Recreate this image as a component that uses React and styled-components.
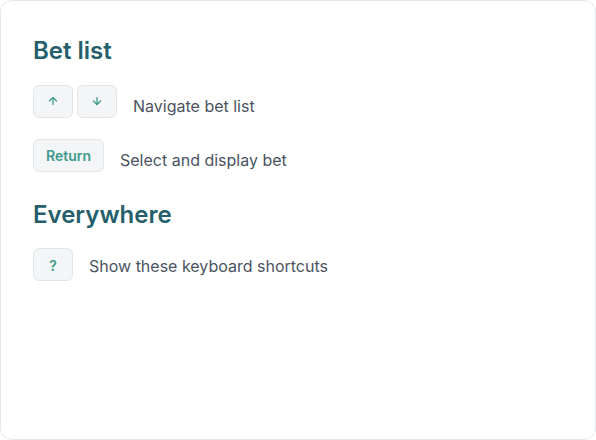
import React from "react";
import styled, { createGlobalStyle } from "styled-components";
import { ArrowUp, ArrowDown } from "lucide-react";

const Global = createGlobalStyle`
  html, body { margin: 0; padding: 0; background: #ffffff; }
  body { font-family: Inter, "Noto Sans", sans-serif; -webkit-font-smoothing: antialiased; }
  * { box-sizing: border-box; }
`;

const Card = styled.div`
  width: 596px;
  height: 440px;
  border: 1px solid #e4e7ea;
  border-radius: 12px;
  background: #ffffff;
  padding: 36px 32px;
  display: flex;
  flex-direction: column;
  gap: 29px;
`;

const Section = styled.section`
  display: flex;
  flex-direction: column;
`;

const Heading = styled.h2`
  margin: 0 0 19px;
  font-size: 24px;
  line-height: 28px;
  font-weight: 600;
  color: #245f6b;
`;

const List = styled.div`
  display: flex;
  flex-direction: column;
  gap: 21px;
`;

const Row = styled.div`
  display: flex;
  align-items: center;
  gap: 16px;
`;

const Keys = styled.div`
  display: flex;
  gap: 4px;
`;

const Key = styled.kbd`
  display: inline-flex;
  align-items: center;
  justify-content: center;
  min-width: 40px;
  height: 33px;
  padding: 0 12px;
  border: 1px solid #e2e6e8;
  border-radius: 6px;
  background: #f3f5f6;
  color: #3d9a8b;
  font-family: Inter, "Noto Sans", sans-serif;
  font-size: 14px;
  font-weight: 600;
  line-height: 1;
  padding-top: ${(p) => p.$drop || 0}px;
`;

const Description = styled.span`
  font-size: 16px;
  line-height: 24px;
  color: #4b5361;
  padding-top: ${(p) => p.$shift || 0}px;
`;

export default function App() {
  return (
    <>
      <Global />
      <Card>
        <Section>
          <Heading>Bet list</Heading>
          <List>
            <Row>
              <Keys>
                <Key><ArrowUp size={12} strokeWidth={2.5} /></Key>
                <Key><ArrowDown size={12} strokeWidth={2.5} /></Key>
              </Keys>
              <Description $shift={10}>Navigate bet list</Description>
            </Row>
            <Row>
              <Keys>
                <Key $drop={1}>Return</Key>
              </Keys>
              <Description $shift={9}>Select and display bet</Description>
            </Row>
          </List>
        </Section>
        <Section>
          <Heading>Everywhere</Heading>
          <List>
            <Row>
              <Keys>
                <Key $drop={2}>?</Key>
              </Keys>
              <Description $shift={3}>Show these keyboard shortcuts</Description>
            </Row>
          </List>
        </Section>
      </Card>
    </>
  );
}
